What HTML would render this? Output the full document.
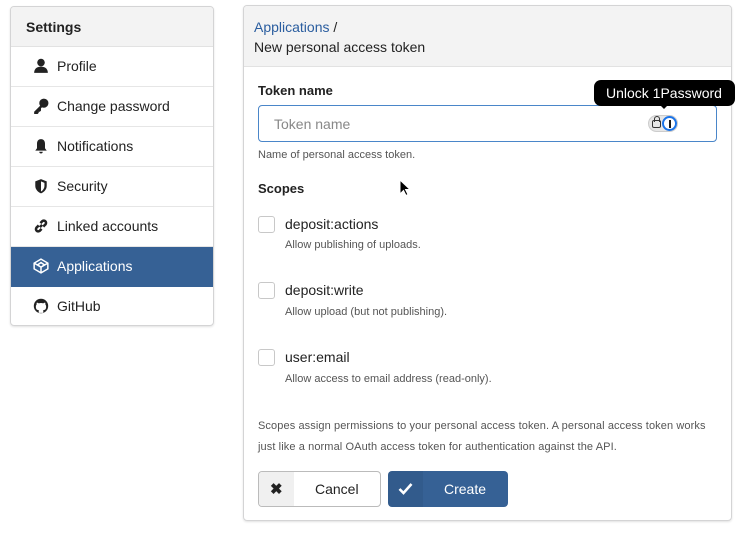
<!DOCTYPE html>
<html><head><style>
*{box-sizing:border-box;margin:0;padding:0}
body{width:756px;height:534px;background:#fff;font-family:"Liberation Sans",sans-serif;color:#222;position:relative;overflow:hidden}
.a{position:absolute}
.side{left:10px;top:6px;width:204px;height:320px;border:1px solid #d4d4d5;border-radius:4px;overflow:hidden;box-shadow:0 1px 2px rgba(0,0,0,.12)}
.side .h{height:40px;background:#f3f3f3;border-bottom:1px solid #e2e2e2;font-weight:bold;font-size:14px;padding:12px 15px}
.side .r{height:40px;border-bottom:1px solid #e6e6e6;font-size:14px;padding:11px 0 0 46px;position:relative;color:#222}
.side .r svg{position:absolute;left:22px;top:11px;width:16px;height:16px}
.side .r.act{background:#366195;color:#fff;border-bottom:none}
.main{left:243px;top:5px;width:489px;height:516px;border:1px solid #d4d4d5;border-radius:4px;overflow:hidden;box-shadow:0 1px 2px rgba(0,0,0,.12)}
.main .h{height:61px;background:#f3f3f3;border-bottom:1px solid #e2e2e2;padding:11px 10px;font-size:14px;line-height:20px}
.lbl{font-weight:bold;font-size:13px}
.small{font-size:11px;color:#555}
.cb{width:17px;height:17px;border:1px solid #c8c8c8;border-radius:3px;background:#fff}
.sc{font-size:14px;color:#222}
</style></head><body>
<div class="a side">
<div class="h">Settings</div>
<div class="r"><svg viewBox="0 0 14 14"><circle cx="7" cy="4" r="3.3" fill="#222"/><path d="M1 13c0-4 3-5.5 6-5.5s6 1.5 6 5.5z" fill="#222"/></svg>Profile</div>
<div class="r"><svg viewBox="0 0 14 14"><circle cx="9.5" cy="4.5" r="4" fill="#222"/><path d="M7 6L1 12v2h3l1-1v-1h1l1-1V9l2-2z" fill="#222"/></svg>Change password</div>
<div class="r"><svg viewBox="0 0 14 14"><path d="M7 1C4.5 1 3.5 3 3.5 5v4L2 11h10l-1.5-2V5C10.5 3 9.5 1 7 1z M5.5 12a1.5 1.5 0 0 0 3 0z" fill="#222"/></svg>Notifications</div>
<div class="r"><svg viewBox="0 0 14 14"><path d="M7 1L2 3v4c0 3 2.5 5.5 5 6.5 2.5-1 5-3.5 5-6.5V3z" fill="#222"/><path d="M7 3L10 4.3V7c0 2-1.5 4-3 4.8z" fill="#fff"/></svg>Security</div>
<div class="r"><svg viewBox="0 0 14 14"><path d="M6 8l2-2M5 6.5L3 8.5a2 2 0 0 0 2.8 2.8L7.5 9.5M9 7.5l2-2A2 2 0 0 0 8.2 2.7L6.5 4.5" stroke="#222" stroke-width="2.2" fill="none"/></svg>Linked accounts</div>
<div class="r act"><svg viewBox="0 0 14 14"><path d="M7 1L13 4.5v5L7 13 1 9.5v-5z M1 4.5L7 8l6-3.5 M7 8v5 M4 6l3-2 3 2-3 2z" stroke="#fff" stroke-width="1.3" fill="none"/></svg>Applications</div>
<div class="r" style="border-bottom:none"><svg viewBox="0 0 14 14"><circle cx="7" cy="7" r="6.3" fill="#222"/><path d="M5 13v-2.5c-1.8 0-2.5-1-2.5-3 0-.8.3-1.4.7-1.8-.1-.5-.1-1.2.2-1.7.7 0 1.3.4 1.6.7a6 6 0 0 1 4 0c.3-.3.9-.7 1.6-.7.3.5.3 1.2.2 1.7.4.4.7 1 .7 1.8 0 2-.7 3-2.5 3V13z" fill="#fff"/></svg>GitHub</div>
</div>

<div class="a main">
<div class="h"><span style="color:#2a5d9f">Applications</span> /<br>New personal access token</div>
</div>
<div class="a lbl" style="left:258px;top:83px">Token name</div>
<div class="a" style="left:258px;top:105px;width:459px;height:37px;border:1px solid #4a86c9;border-radius:4px;padding:10px 15px;font-size:14px;color:#888">Token name</div>
<div class="a" style="left:648px;top:115px;width:30px;height:17px;border-radius:9px;background:#e6e6e6;border:1px solid #ccc"></div>
<div class="a" style="left:652px;top:120px;width:9px;height:8px;border:1.5px solid #333;border-radius:2px"></div>
<div class="a" style="left:653.5px;top:116px;width:6px;height:6px;border:1.5px solid #333;border-bottom:none;border-radius:3px 3px 0 0"></div>
<div class="a" style="left:662px;top:116px;width:15px;height:15px;border-radius:50%;border:2px solid #1a73e8;background:#fff"></div>
<div class="a" style="left:668.5px;top:119.5px;width:2px;height:8px;background:#1a1a1a"></div>
<div class="a" style="left:594px;top:80px;width:141px;height:26px;background:#000;border-radius:7px;color:#fff;font-size:14px;padding:5px 0 0 12px">Unlock 1Password</div>
<div class="a" style="left:659px;top:104px;width:0;height:0;border-left:5px solid transparent;border-right:5px solid transparent;border-top:5px solid #000"></div>
<div class="a small" style="left:258px;top:149px">Name of personal access token.</div>
<div class="a lbl" style="left:258px;top:181px">Scopes</div>

<div class="a cb" style="left:258px;top:216px"></div>
<div class="a sc" style="left:285px;top:216px">deposit:actions</div>
<div class="a small" style="left:285px;top:239px">Allow publishing of uploads.</div>
<div class="a cb" style="left:258px;top:282px"></div>
<div class="a sc" style="left:285px;top:282px">deposit:write</div>
<div class="a small" style="left:285px;top:306px">Allow upload (but not publishing).</div>
<div class="a cb" style="left:258px;top:349px"></div>
<div class="a sc" style="left:285px;top:349px">user:email</div>
<div class="a small" style="left:285px;top:373px">Allow access to email address (read-only).</div>

<div class="a small" style="left:258px;top:416px;width:470px;line-height:21px;letter-spacing:0.1px">Scopes assign permissions to your personal access token. A personal access token works<br>just like a normal OAuth access token for authentication against the API.</div>

<div class="a" style="left:258px;top:471px;width:123px;height:36px;border:1px solid #bbb;border-radius:4px;overflow:hidden;background:#fff">
<div style="position:absolute;left:0;top:0;width:35px;height:100%;background:#f0f0f0"></div>
<div style="position:absolute;left:11px;top:8px;font-size:15px;font-weight:bold;color:#222">✖</div>
<div style="position:absolute;left:56px;top:9px;font-size:14px">Cancel</div>
</div>
<div class="a" style="left:388px;top:471px;width:120px;height:36px;background:#366195;border-radius:4px;overflow:hidden">
<div style="position:absolute;left:0;top:0;width:35px;height:100%;background:rgba(0,0,0,.06)"></div>
<svg style="position:absolute;left:10px;top:11px" width="15" height="13" viewBox="0 0 15 13"><path d="M1.5 7l4 4 8-9" stroke="#fff" stroke-width="2.6" fill="none"/></svg>
<div style="position:absolute;left:56px;top:10px;font-size:14px;color:#fff">Create</div>
</div>
<svg class="a" style="left:399px;top:179px" width="12" height="18" viewBox="0 0 12 18"><path d="M1 1v14l3.5-3.5 2.5 5 2-1-2.5-5H11z" fill="#000" stroke="#fff" stroke-width="1"/></svg>
</body></html>
